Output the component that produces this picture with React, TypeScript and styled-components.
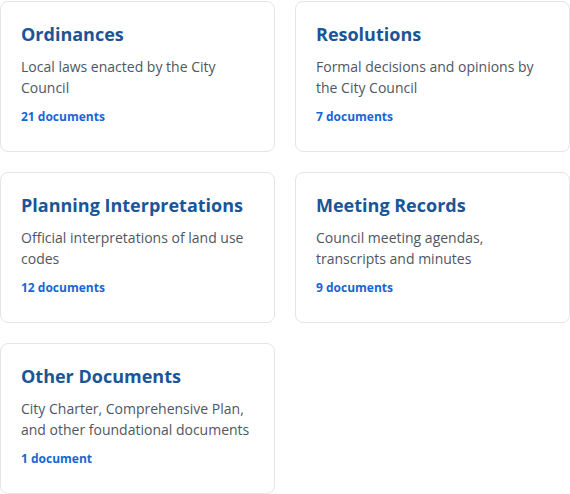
import React from "react";
import styled, { createGlobalStyle } from "styled-components";

const Global = createGlobalStyle`
  html, body { margin: 0; padding: 0; background: #ffffff; }
  body { font-family: "Open Sans", "Noto Sans", sans-serif; -webkit-font-smoothing: antialiased; }
`;

const Grid = styled.div`
  display: grid;
  grid-template-columns: 275px 275px;
  column-gap: 20px;
  row-gap: 20px;
  width: 570px;
  padding-top: 1px;
`;

const Card = styled.div`
  box-sizing: border-box;
  height: 151px;
  border: 1px solid #e3e5e8;
  border-radius: 8px;
  background: #ffffff;
  padding: 20px 20px;
  display: flex;
  flex-direction: column;
`;

const Title = styled.h3`
  margin: 0 0 10px;
  font-size: 18px;
  line-height: 24px;
  font-weight: 700;
  color: #1a5597;
`;

const Desc = styled.p`
  margin: 0 0 10px;
  font-size: 14px;
  line-height: 21px;
  color: #4f5663;
`;

const Count = styled.span`
  font-size: 12px;
  line-height: 18px;
  font-weight: 700;
  color: #1766d6;
`;

const items = [
  { title: "Ordinances", desc: "Local laws enacted by the City Council", count: "21 documents" },
  { title: "Resolutions", desc: "Formal decisions and opinions by the City Council", count: "7 documents" },
  { title: "Planning Interpretations", desc: "Official interpretations of land use codes", count: "12 documents" },
  { title: "Meeting Records", desc: "Council meeting agendas, transcripts and minutes", count: "9 documents" },
  { title: "Other Documents", desc: "City Charter, Comprehensive Plan, and other foundational documents", count: "1 document" },
];

export default function App() {
  return (
    <>
      <Global />
      <Grid>
        {items.map((it) => (
          <Card key={it.title}>
            <Title>{it.title}</Title>
            <Desc>{it.desc}</Desc>
            <Count>{it.count}</Count>
          </Card>
        ))}
      </Grid>
    </>
  );
}
